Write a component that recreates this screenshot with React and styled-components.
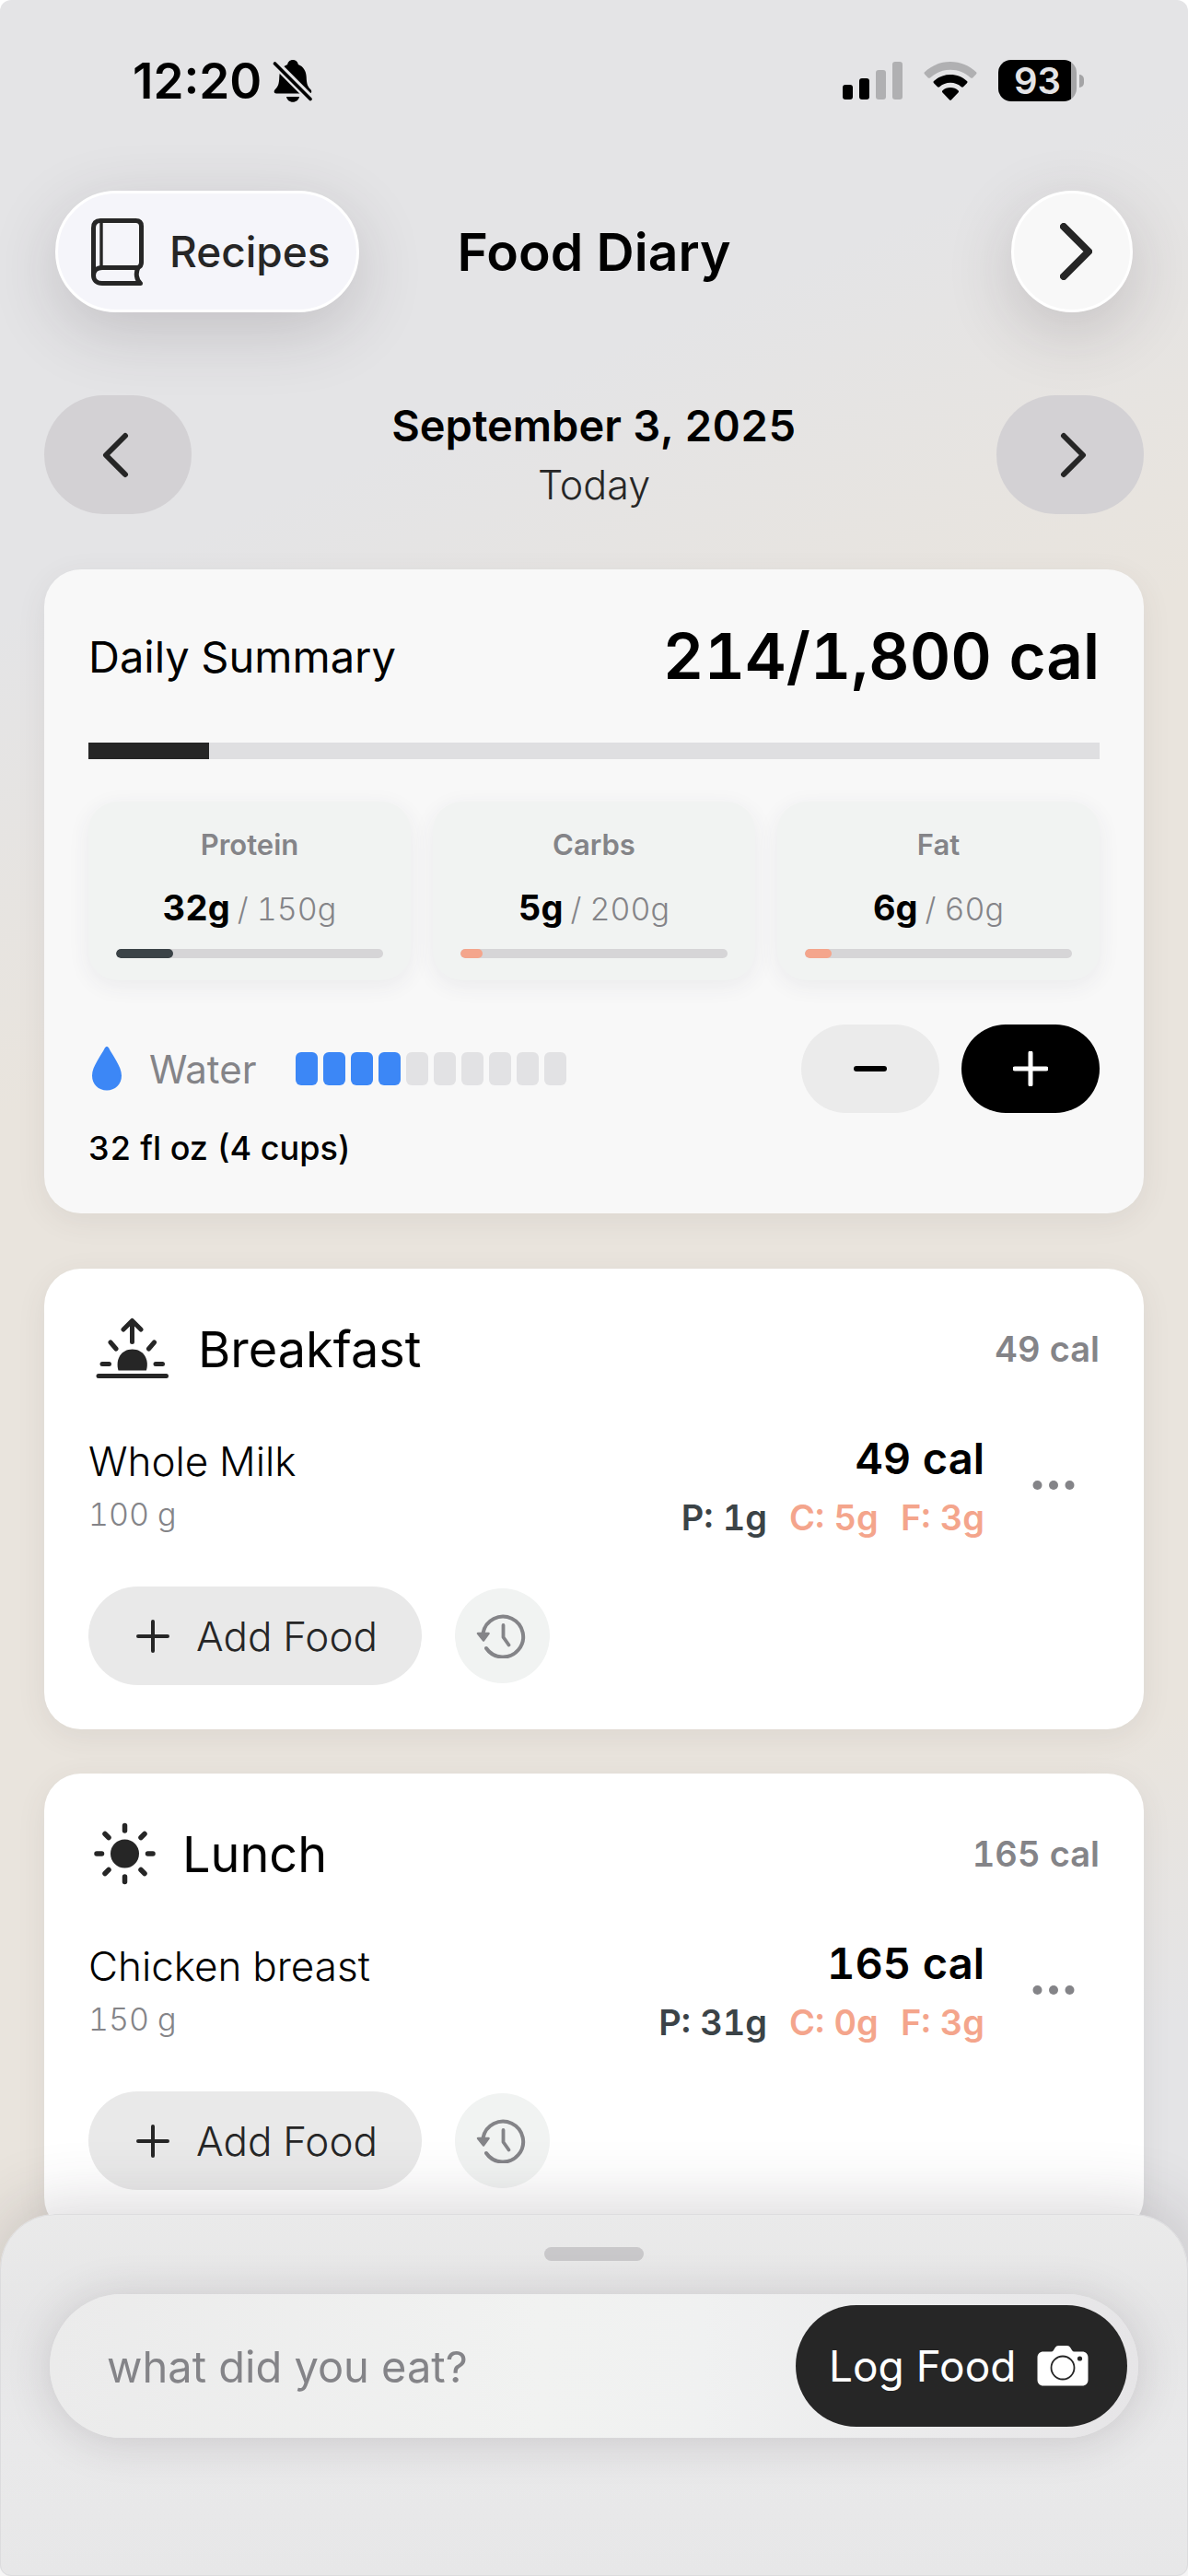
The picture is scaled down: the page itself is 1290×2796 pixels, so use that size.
import React, { useState } from "react";
import styled, { createGlobalStyle } from "styled-components";

const MACROS = [
  { name: "Protein", value: 32, goal: 150, color: "#3b4347" },
  { name: "Carbs", value: 5, goal: 200, color: "#f4a58c" },
  { name: "Fat", value: 6, goal: 60, color: "#f4a58c" },
];

const MEALS = [
  {
    name: "Breakfast",
    icon: "sunrise",
    food: "Whole Milk",
    amount: "100 g",
    cal: 49,
    protein: 1,
    carbs: 5,
    fat: 3,
  },
  {
    name: "Lunch",
    icon: "sun",
    food: "Chicken breast",
    amount: "150 g",
    cal: 165,
    protein: 31,
    carbs: 0,
    fat: 3,
  },
];

const CUPS = 10;

const BellOffIcon = () => (
  <svg width="44" height="46" viewBox="0 0 44 46" aria-hidden="true">
    <path
      d="M22 0c3.200 0 5.500 2.200 5.800 5 5.600 2.200 8.700 7 8.900 13.500.2 8 1.500 10.500 4.500 13.500 1.600 1.600 1.500 4.500-1.200 4.500H4C1.300 36.500 1 33.600 2.800 32c3-3 4.300-5.500 4.500-13.500C7.500 12 10.600 7.200 16.200 5 16.500 2.200 18.800 0 22 0zM15 40h14c-.6 3.400-3.400 5.800-7 5.800S15.600 43.400 15 40z"
      fill="#000"
    />
    <path d="M3 4l39 39" stroke="#e4e4e6" strokeWidth="9" />
    <path d="M2.500 4l38.500 38.500" stroke="#000" strokeWidth="3.600" strokeLinecap="round" />
  </svg>
);

const SignalIcon = () => (
  <svg width="65" height="41" viewBox="0 0 65 41" aria-hidden="true">
    <rect x="0" y="25" width="11" height="16" rx="3" />
    <rect x="18" y="18" width="11" height="23" rx="3" />
    <rect x="36" y="9" width="11" height="32" rx="3" fill="#b0b0b2" />
    <rect x="54" y="0" width="11" height="41" rx="3" fill="#b0b0b2" />
  </svg>
);

const WifiIcon = () => (
  <svg width="58" height="42" viewBox="0 0 58 42" aria-hidden="true">
    <path
      d="M29 0c10.800 0 20.600 4.200 28 11.200.7.700.7 1.600 0 2.300l-3.800 3.900c-.6.600-1.500.6-2.200 0C45 11.900 37.400 8.700 29 8.700S13 11.900 7 17.400c-.7.600-1.600.6-2.200 0L1 13.500c-.7-.7-.7-1.600 0-2.300C8.400 4.200 18.200 0 29 0z"
      fill="#b0b0b2"
    />
    <path d="M29 14c6.900 0 13.200 2.600 18 7 .7.600.7 1.500 0 2.200l-4 4c-.6.600-1.500.6-2.200 0-3.200-2.900-7.300-4.500-11.800-4.500s-8.600 1.600-11.800 4.500c-.7.600-1.600.6-2.200 0l-4-4c-.7-.7-.7-1.600 0-2.200 4.800-4.400 11.100-7 18-7z" />
    <path d="M29 28c3.300 0 6.200 1.200 8.500 3.200.7.600.7 1.500 0 2.200l-7.400 7.800c-.6.700-1.600.7-2.200 0l-7.400-7.800c-.7-.7-.7-1.600 0-2.200C22.800 29.200 25.700 28 29 28z" />
  </svg>
);

const BookIcon = () => (
  <svg
    width="57"
    height="73"
    viewBox="0 0 57 73"
    fill="none"
    stroke="#262626"
    strokeWidth="5"
    strokeLinejoin="round"
    aria-hidden="true"
  >
    <path d="M2.500 62V10.500C2.500 5.500 5 2.500 10 2.500h38.500c4 0 6 2 6 6V48c0 2.500-1.500 4.500-3.500 5.500H12c-6 0-9.500 3.500-9.500 8.500 0 5 3.500 8.500 9.500 8.500h41.500c-4.500-4-5.500-11.500-2.500-17" />
    <path d="M11 3v50.500" strokeWidth="3.400" />
  </svg>
);

const Chevron = ({ size, left, weight }) => (
  <svg
    width={size / 2 + 8}
    height={size + 8}
    viewBox={`-4 -4 ${size / 2 + 8} ${size + 8}`}
    fill="none"
    stroke="#262626"
    strokeWidth={weight}
    strokeLinecap="round"
    strokeLinejoin="round"
    aria-hidden="true"
  >
    {left ? (
      <path d={`M${size / 2} 0L0 ${size / 2}l${size / 2} ${size / 2}`} />
    ) : (
      <path d={`M0 0l${size / 2} ${size / 2}L0 ${size}`} />
    )}
  </svg>
);

const DropIcon = () => (
  <svg width="34" height="48" viewBox="0 0 34 48" aria-hidden="true">
    <path
      d="M17 0c1 0 1.600.5 2.200 1.600C23 9.500 33 21.500 33 31.500 33 41 26 47.500 17 47.500S1 41 1 31.500C1 21.500 11 9.500 14.800 1.600 15.400.5 16 0 17 0z"
      fill="#3c87f6"
    />
  </svg>
);

const PlusIcon = ({ size, color, weight }) => (
  <svg
    width={size}
    height={size}
    viewBox={`0 0 ${size} ${size}`}
    stroke={color}
    strokeWidth={weight}
    strokeLinecap="round"
    aria-hidden="true"
  >
    <path d={`M2 ${size / 2}h${size - 4}M${size / 2} 2v${size - 4}`} />
  </svg>
);

const MinusIcon = () => (
  <svg width="36" height="8" viewBox="0 0 36 8" aria-hidden="true">
    <rect x="0" y="1" width="36" height="6" rx="3" />
  </svg>
);

const SunriseIcon = () => (
  <svg
    width="95"
    height="68"
    viewBox="0 0 95 68"
    fill="none"
    stroke="#262626"
    strokeWidth="5"
    strokeLinecap="round"
    strokeLinejoin="round"
    aria-hidden="true"
  >
    <path d="M11 63.500h73.500M47.500 4.500v22M38 13l9.500-9.500L57 13M24 27l6 7M71.500 27l-6 7M15 50.500h7.500M73 50.500h7.500" />
    <path
      d="M32.500 57.500c-3.500-12 3-23 15.200-23s18.700 11 15.200 23z"
      fill="#262626"
      stroke="none"
    />
  </svg>
);

const SunIcon = () => (
  <svg
    width="78"
    height="68"
    viewBox="0 0 78 68"
    stroke="#262626"
    strokeWidth="5.500"
    strokeLinecap="round"
    aria-hidden="true"
  >
    <circle cx="39.500" cy="34" r="15.500" fill="#262626" stroke="none" />
    <path d="M39.500 3.500V9M39.500 59v5.500M9 34h5.500M64.500 34H70M18 12.500l4 4M57 51.500l4 4M61 12.500l-4 4M22 51.500l-4 4" />
  </svg>
);

const HistoryIcon = () => (
  <svg
    width="54"
    height="48"
    viewBox="0 0 54 48"
    fill="none"
    stroke="#848488"
    strokeWidth="4"
    strokeLinecap="round"
    strokeLinejoin="round"
    aria-hidden="true"
  >
    <path d="M7.500 20.500A22 22 0 1 1 11 37" />
    <path d="M29.500 12v13l6 8.500" strokeWidth="3.800" />
    <path d="M2 21h11.500L8 28.500z" fill="#848488" strokeWidth="2.500" />
  </svg>
);

const DotsIcon = () => (
  <svg width="46" height="12" viewBox="0 0 46 12" fill="#848488" aria-hidden="true">
    <circle cx="5.500" cy="6" r="5" />
    <circle cx="23" cy="6" r="5" />
    <circle cx="40.500" cy="6" r="5" />
  </svg>
);

const CameraIcon = () => (
  <svg width="56" height="44" viewBox="0 0 56 44" aria-hidden="true">
    <path
      d="M7 6.500h8.500c1 0 1.800-.4 2.300-1.200l2-3.300C20.600.8 21.800 0 23.200 0h9.600c1.400 0 2.600.8 3.400 2l2 3.300c.5.800 1.300 1.200 2.300 1.200H49c4 0 6.500 2.500 6.500 6.500v24c0 4-2.500 6.500-6.500 6.500H7C3 43.500.5 41 .5 37V13C.5 9 3 6.500 7 6.500z"
      fill="#fff"
    />
    <circle cx="28" cy="24" r="12.500" fill="none" stroke="#262626" strokeWidth="1.800" />
    <circle cx="46.500" cy="14" r="2.600" fill="#262626" />
  </svg>
);

const Meal = ({ meal }) => (
  <MealCard>
    <MealHeader>
      {meal.icon === "sunrise" ? <SunriseIcon /> : <SunIcon />}
      <MealTitle>{meal.name}</MealTitle>
      <MealTotal>{meal.cal} cal</MealTotal>
    </MealHeader>
    <FoodRow>
      <FoodInfo>
        <FoodName>{meal.food}</FoodName>
        <FoodAmount>{meal.amount}</FoodAmount>
      </FoodInfo>
      <FoodNumbers>
        <FoodCal>{meal.cal} cal</FoodCal>
        <FoodMacros>
          <FoodMacro $color="#3b4347">P: {meal.protein}g</FoodMacro>
          <FoodMacro $color="#f4a58c">C: {meal.carbs}g</FoodMacro>
          <FoodMacro $color="#f4a58c">F: {meal.fat}g</FoodMacro>
        </FoodMacros>
      </FoodNumbers>
      <MoreButton aria-label="More options">
        <DotsIcon />
      </MoreButton>
    </FoodRow>
    <MealActions>
      <AddFoodButton>
        <PlusIcon size={36} color="#262626" weight={4} />
        Add Food
      </AddFoodButton>
      <HistoryButton aria-label="Recent foods">
        <HistoryIcon />
      </HistoryButton>
    </MealActions>
  </MealCard>
);

const App = () => {
  const [cups, setCups] = useState(4);
  const [query, setQuery] = useState("");

  return (
    <>
      <GlobalStyle />
      <Screen>
        <StatusBar>
          <StatusTime>12:20</StatusTime>
          <BellOffIcon />
          <StatusIcons>
            <SignalIcon />
            <WifiIcon />
            <Battery>
              <BatteryBody>93</BatteryBody>
              <BatteryTip />
            </Battery>
          </StatusIcons>
        </StatusBar>

        <Header>
          <RecipesButton>
            <BookIcon />
            Recipes
          </RecipesButton>
          <Title>Food Diary</Title>
          <ForwardButton aria-label="Forward">
            <Chevron size={54} weight={8} />
          </ForwardButton>
        </Header>

        <DateBar>
          <DateButton aria-label="Previous day">
            <Chevron size={42} weight={6} left />
          </DateButton>
          <DateText>
            <DateMain>September 3, 2025</DateMain>
            <DateSub>Today</DateSub>
          </DateText>
          <DateButton $next aria-label="Next day">
            <Chevron size={42} weight={6} />
          </DateButton>
        </DateBar>

        <SummaryCard>
          <SummaryHeader>
            <SummaryLabel>Daily Summary</SummaryLabel>
            <SummaryTotal>214/1,800 cal</SummaryTotal>
          </SummaryHeader>
          <CalorieTrack>
            <CalorieFill style={{ width: `${(214 / 1800) * 100}%` }} />
          </CalorieTrack>
          <MacroGrid>
            {MACROS.map(macro => (
              <MacroCard key={macro.name}>
                <MacroName>{macro.name}</MacroName>
                <MacroValue>
                  {macro.value}g<MacroGoal>/ {macro.goal}g</MacroGoal>
                </MacroValue>
                <MacroTrack>
                  <MacroFill
                    $color={macro.color}
                    style={{ width: `${(macro.value / macro.goal) * 100}%` }}
                  />
                </MacroTrack>
              </MacroCard>
            ))}
          </MacroGrid>
          <WaterRow>
            <DropIcon />
            <WaterLabel>Water</WaterLabel>
            <Cups>
              {Array.from({ length: CUPS }, (_, i) => (
                <Cup key={i} $full={i < cups} />
              ))}
            </Cups>
            <WaterButtons>
              <WaterButton
                aria-label="Remove a cup"
                onClick={() => setCups(Math.max(0, cups - 1))}
              >
                <MinusIcon />
              </WaterButton>
              <WaterButton
                $dark
                aria-label="Add a cup"
                onClick={() => setCups(Math.min(CUPS, cups + 1))}
              >
                <PlusIcon size={38} color="#fff" weight={5} />
              </WaterButton>
            </WaterButtons>
          </WaterRow>
          <WaterTotal>
            {cups * 8} fl oz ({cups} cups)
          </WaterTotal>
        </SummaryCard>

        <Meals>
          {MEALS.map(meal => (
            <Meal key={meal.name} meal={meal} />
          ))}
        </Meals>
      </Screen>

      <Sheet>
        <Grabber />
        <LogBar>
          <LogInput
            aria-label="what did you eat?"
            placeholder="what did you eat?"
            value={query}
            onChange={e => setQuery(e.target.value)}
          />
          <LogButton>
            Log Food
            <CameraIcon />
          </LogButton>
        </LogBar>
      </Sheet>
    </>
  );
};

export default App;

const GlobalStyle = createGlobalStyle`
  * {
    box-sizing: border-box;
  }
  body {
    margin: 0;
    background: #fff;
    color: #000;
    font-family: Inter, "Liberation Sans", sans-serif;
  }
  h1, h2, p {
    margin: 0;
  }
  button, input {
    border: 0;
    padding: 0;
    margin: 0;
    font: inherit;
    color: inherit;
    background: none;
  }
  button {
    cursor: pointer;
  }
  svg {
    flex: none;
  }
`;

const Screen = styled.main`
  min-height: 100vh;
  padding-bottom: 360px;
  border-radius: 12px;
  background: linear-gradient(
    156deg,
    #e4e4e6 20%,
    #e9e4dd 36%,
    #e9e4dd 72%,
    #e4e4e6 82%
  );
`;

const StatusBar = styled.div`
  display: flex;
  align-items: center;
  height: 175px;
  padding: 0 113px 0 144px;
`;

const StatusTime = styled.span`
  margin-right: 12px;
  font-size: 53px;
  font-weight: 600;
`;

const StatusIcons = styled.div`
  display: flex;
  align-items: center;
  gap: 23px;
  margin-left: auto;
`;

const Battery = styled.div`
  display: flex;
  align-items: center;
  gap: 3px;
`;

const BatteryBody = styled.span`
  width: 85px;
  height: 45px;
  border-radius: 14px;
  background: linear-gradient(to right, #000 93%, #a4a4a6 93%);
  color: #e4e4e6;
  font-size: 40px;
  font-weight: 600;
  line-height: 45px;
  text-align: center;
`;

const BatteryTip = styled.span`
  width: 5px;
  height: 14px;
  border-radius: 0 5px 5px 0;
  background: #a4a4a6;
`;

const Header = styled.header`
  display: grid;
  grid-template-columns: 1fr auto 1fr;
  align-items: center;
  margin-top: 32px;
  padding: 0 60px;
`;

const GlassButton = styled.button`
  display: flex;
  align-items: center;
  height: 132px;
  border: 3px solid #fff;
  border-radius: 66px;
  background: #f5f5fa;
  box-shadow: 0 20px 72px rgba(60, 50, 60, 0.2);
`;

const RecipesButton = styled(GlassButton)`
  justify-self: start;
  gap: 28px;
  padding: 0 28px 0 36px;
  color: #262626;
  font-size: 46px;
  font-weight: 500;
`;

const ForwardButton = styled(GlassButton)`
  justify-self: end;
  justify-content: center;
  width: 132px;
  padding-left: 8px;
  background: #f8f8f8;
`;

const Title = styled.h1`
  font-size: 57px;
  font-weight: 600;
`;

const DateBar = styled.div`
  display: flex;
  align-items: center;
  justify-content: space-between;
  margin-top: 90px;
  padding: 0 48px;
`;

const DateButton = styled.button`
  display: flex;
  align-items: center;
  justify-content: center;
  width: 160px;
  height: 129px;
  padding: ${({ $next }) => ($next ? "0 0 0 6px" : "0 6px 0 0")};
  border-radius: 65px;
  background: #d3d1d4;
`;

const DateText = styled.div`
  text-align: center;
  line-height: 64px;
  font-variant-numeric: tabular-nums;
`;

const DateMain = styled.p`
  font-size: 47px;
  font-weight: 600;
`;

const DateSub = styled.p`
  color: #262626;
  font-size: 43px;
  font-weight: 300;
`;

const Card = styled.section`
  margin: 0 48px;
  padding: 48px;
  border-radius: 40px;
  box-shadow: 0 8px 32px rgba(80, 60, 60, 0.08);
  font-variant-numeric: tabular-nums;
`;

const SummaryCard = styled(Card)`
  margin-top: 60px;
  background: #f8f8f8;
`;

const SummaryHeader = styled.div`
  display: flex;
  align-items: center;
  justify-content: space-between;
  height: 92px;
`;

const SummaryLabel = styled.h2`
  font-size: 47px;
  font-weight: 400;
`;

const SummaryTotal = styled.p`
  font-size: 69px;
  font-weight: 600;
`;

const CalorieTrack = styled.div`
  height: 18px;
  margin-top: 48px;
  background: #dfdfe1;
`;

const CalorieFill = styled.div`
  height: 100%;
  background: #262626;
`;

const MacroGrid = styled.div`
  display: grid;
  grid-template-columns: repeat(3, 1fr);
  gap: 24px;
  margin-top: 46px;
`;

const MacroCard = styled.div`
  display: flex;
  flex-direction: column;
  gap: 18px;
  padding: 24px 30px;
  border-radius: 32px;
  background: #f1f3f2;
  box-shadow: 0 6px 24px rgba(60, 60, 90, 0.07);
  text-align: center;
`;

const MacroName = styled.p`
  color: #848488;
  font-size: 31px;
  font-weight: 600;
  line-height: 46px;
`;

const MacroValue = styled.p`
  font-size: 38px;
  font-weight: 700;
  line-height: 54px;
`;

const MacroGoal = styled.span`
  margin-left: 8px;
  color: #848488;
  font-size: 34px;
  font-weight: 300;
  line-height: 1;
`;

const MacroTrack = styled.div`
  height: 10px;
  border-radius: 5px;
  background: #d6d5d7;
  overflow: hidden;
`;

const MacroFill = styled.div`
  min-width: 24px;
  height: 100%;
  border-radius: 5px;
  background: ${({ $color }) => $color};
`;

const WaterRow = styled.div`
  display: flex;
  align-items: center;
  margin-top: 48px;
  padding-left: 3px;
`;

const WaterLabel = styled.span`
  margin: 0 43px 0 29px;
  color: #848488;
  font-size: 42px;
`;

const Cups = styled.div`
  display: flex;
  gap: 6px;
`;

const Cup = styled.span`
  width: 24px;
  height: 36px;
  border-radius: 6px;
  background: ${({ $full }) => ($full ? "#3c87f6" : "#e2e2e4")};
`;

const WaterButtons = styled.div`
  display: flex;
  gap: 24px;
  margin-left: auto;
`;

const WaterButton = styled.button`
  display: flex;
  align-items: center;
  justify-content: center;
  width: 150px;
  height: 96px;
  border-radius: 48px;
  background: ${({ $dark }) => ($dark ? "#000" : "#ebebeb")};
`;

const WaterTotal = styled.p`
  margin-top: 15px;
  font-size: 36px;
  font-weight: 500;
  line-height: 46px;
`;

const Meals = styled.div`
  display: flex;
  flex-direction: column;
  gap: 48px;
  margin-top: 60px;
`;

const MealCard = styled(Card)`
  background: #fff;
`;

const MealHeader = styled.div`
  display: flex;
  align-items: center;
  gap: 24px;
  height: 78px;
`;

const MealTitle = styled.h2`
  font-size: 54px;
  font-weight: 400;
`;

const MealTotal = styled.span`
  margin-left: auto;
  color: #848488;
  font-size: 38px;
  font-weight: 600;
`;

const FoodRow = styled.div`
  display: flex;
  align-items: center;
  gap: 24px;
  margin-top: 48px;
`;

const FoodInfo = styled.div`
  flex: 1;
  line-height: 58px;
`;

const FoodName = styled.p`
  font-size: 44px;
  font-weight: 300;
`;

const FoodAmount = styled.p`
  color: #848488;
  font-size: 34px;
  font-weight: 300;
`;

const FoodNumbers = styled.div`
  line-height: 64px;
  text-align: right;
`;

const FoodCal = styled.p`
  font-size: 47px;
  font-weight: 600;
`;

const FoodMacros = styled.div`
  display: flex;
  justify-content: flex-end;
  gap: 24px;
`;

const FoodMacro = styled.span`
  color: ${({ $color }) => $color};
  font-size: 38px;
  font-weight: 600;
`;

const MoreButton = styled.button`
  display: flex;
  align-items: center;
  justify-content: center;
  width: 101px;
  height: 96px;
  padding-bottom: 6px;
`;

const MealActions = styled.div`
  display: flex;
  align-items: center;
  gap: 36px;
  margin-top: 43px;
`;

const AddFoodButton = styled.button`
  display: flex;
  align-items: center;
  gap: 29px;
  height: 107px;
  padding: 0 48px 0 52px;
  border-radius: 54px;
  background: #e9e9e9;
  color: #262626;
  font-size: 44px;
  font-weight: 300;
`;

const HistoryButton = styled.button`
  display: flex;
  align-items: center;
  justify-content: center;
  width: 103px;
  height: 103px;
  padding-right: 4px;
  border-radius: 50%;
  background: #f1f3f2;
`;

const Sheet = styled.footer`
  position: fixed;
  right: 0;
  bottom: 0;
  left: 0;
  padding: 35px 53px 149px;
  border: 1px solid #dcdcde;
  border-radius: 60px 60px 12px 12px;
  background: linear-gradient(#eaeaea, #e6e6e7 28%, #e9e9ea 65%, #e7e7e8);
  box-shadow: 0 -8px 72px rgba(60, 50, 60, 0.2);
`;

const Grabber = styled.div`
  width: 108px;
  height: 15px;
  margin: 0 auto 36px;
  border-radius: 8px;
  background: #c9c8ca;
`;

const LogBar = styled.div`
  display: flex;
  align-items: center;
  height: 156px;
  padding: 0 12px 0 62px;
  border-radius: 78px;
  background: linear-gradient(to right, #ebebeb, #f1f2f1 45%, #f0f1f1 60%, #e6e5e7);
  box-shadow: 0 4px 48px rgba(60, 50, 60, 0.18);
`;

const LogInput = styled.input`
  flex: 1;
  min-width: 0;
  height: 132px;
  outline: none;
  font-size: 47px;
  font-weight: 400;

  &::placeholder {
    color: #848488;
    opacity: 1;
  }
`;

const LogButton = styled.button`
  display: flex;
  align-items: center;
  justify-content: space-between;
  width: 360px;
  height: 132px;
  padding: 0 42px 0 36px;
  border-radius: 66px;
  background: #262626;
  color: #fff;
  font-size: 46px;
  font-weight: 400;
`;
